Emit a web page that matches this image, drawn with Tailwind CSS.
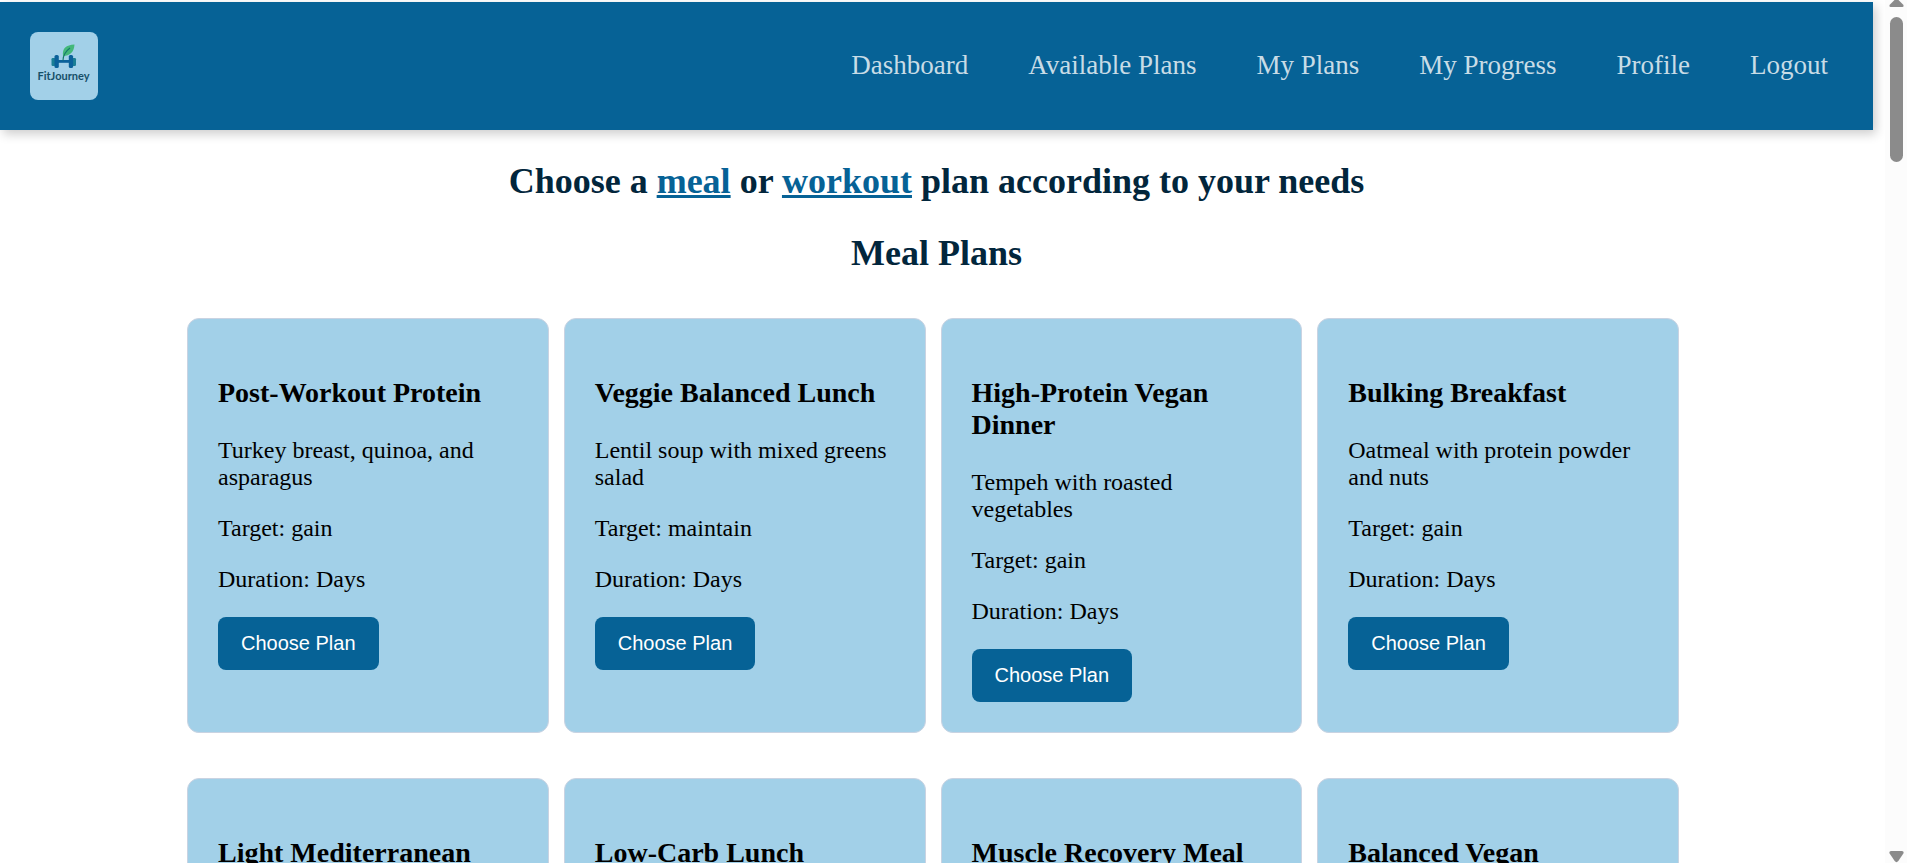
<!DOCTYPE html>
<html lang="en">
<head>
<meta charset="utf-8">
<title>FitJourney</title>
<script src="https://cdn.jsdelivr.net/npm/@tailwindcss/browser@4"></script>
</head>
<body class="h-screen overflow-hidden bg-white font-['Times_New_Roman','Liberation_Serif',serif] text-black">
<div class="flex h-full">
  <div class="h-full min-w-0 flex-1 overflow-hidden pt-0.5 pr-3">
    <header class="flex h-32 items-center justify-between bg-[#066296] pr-[45px] pl-[30px] shadow-[3px_4px_10px_rgba(0,0,0,0.2)]">
      <a href="#" aria-label="FitJourney home" class="block size-[68px] overflow-hidden rounded-lg bg-[#a2d0e8]">
        <svg viewBox="0 0 68 68" class="size-full">
          <g fill="#1a7f95"><rect x="21.500" y="26" width="4" height="8" rx="1.200"/><rect x="42" y="26" width="4" height="8" rx="1.200"/></g>
          <g fill="#0a619a"><rect x="24.500" y="23" width="4.300" height="13" rx="1.600"/><rect x="38.800" y="23" width="4.300" height="13" rx="1.600"/><rect x="28" y="28" width="12" height="2.800"/></g>
          <path d="M33 24C32 16 36 13 44.500 12.500C44 20 40 24 33 24Z" fill="#43b87a"/>
          <path d="M33 28.500C33 23 36 19 40 16" fill="none" stroke="#147a6a" stroke-width="1.100"/>
          <text x="33.500" y="48" text-anchor="middle" font-family="Lato, sans-serif" font-weight="700" font-size="11" fill="#164f68">FitJourney</text>
        </svg>
      </a>
      <nav class="flex gap-[60px] pb-0.5 text-[27px] leading-8 text-[#c8dce6]">
        <a href="#">Dashboard</a>
        <a href="#">Available Plans</a>
        <a href="#">My Plans</a>
        <a href="#">My Progress</a>
        <a href="#">Profile</a>
        <a href="#">Logout</a>
      </nav>
    </header>
    <main class="pt-[30px]">
      <h1 class="text-center text-4xl leading-[42px] font-bold text-[#02263c]">Choose a <a href="#meal" class="text-[#066296] underline">meal</a> or <a href="#workout" class="text-[#066296] underline">workout</a> plan according to your needs</h1>
      <h2 id="meal" class="mt-[30px] text-center text-4xl leading-[42px] font-bold text-[#02263c]">Meal Plans</h2>
      <section class="mt-11 mr-[194px] ml-[187px] grid grid-cols-4 gap-x-[15px] gap-y-[45px] text-2xl leading-[27px]">
        <article class="rounded-xl border border-[#c9d3e2] bg-[#a2d0e8] p-[30px]">
          <h3 class="my-7 text-[28px] leading-8 font-bold">Post-Workout Protein</h3>
          <p class="mb-6">Turkey breast, quinoa, and asparagus</p>
          <p class="mb-6">Target: gain</p>
          <p class="mb-6">Duration: Days</p>
          <button class="block rounded-lg bg-[#066296] px-[23px] py-[15px] font-['Liberation_Sans',sans-serif] text-xl leading-[23px] text-white">Choose Plan</button>
        </article>
        <article class="rounded-xl border border-[#c9d3e2] bg-[#a2d0e8] p-[30px]">
          <h3 class="my-7 text-[28px] leading-8 font-bold">Veggie Balanced Lunch</h3>
          <p class="mb-6">Lentil soup with mixed greens salad</p>
          <p class="mb-6">Target: maintain</p>
          <p class="mb-6">Duration: Days</p>
          <button class="block rounded-lg bg-[#066296] px-[23px] py-[15px] font-['Liberation_Sans',sans-serif] text-xl leading-[23px] text-white">Choose Plan</button>
        </article>
        <article class="rounded-xl border border-[#c9d3e2] bg-[#a2d0e8] p-[30px]">
          <h3 class="my-7 text-[28px] leading-8 font-bold">High-Protein Vegan Dinner</h3>
          <p class="mb-6">Tempeh with roasted vegetables</p>
          <p class="mb-6">Target: gain</p>
          <p class="mb-6">Duration: Days</p>
          <button class="block rounded-lg bg-[#066296] px-[23px] py-[15px] font-['Liberation_Sans',sans-serif] text-xl leading-[23px] text-white">Choose Plan</button>
        </article>
        <article class="rounded-xl border border-[#c9d3e2] bg-[#a2d0e8] p-[30px]">
          <h3 class="my-7 text-[28px] leading-8 font-bold">Bulking Breakfast</h3>
          <p class="mb-6">Oatmeal with protein powder and nuts</p>
          <p class="mb-6">Target: gain</p>
          <p class="mb-6">Duration: Days</p>
          <button class="block rounded-lg bg-[#066296] px-[23px] py-[15px] font-['Liberation_Sans',sans-serif] text-xl leading-[23px] text-white">Choose Plan</button>
        </article>
        <article class="rounded-xl border border-[#c9d3e2] bg-[#a2d0e8] p-[30px]">
          <h3 class="my-7 text-[28px] leading-8 font-bold">Light Mediterranean</h3>
        </article>
        <article class="rounded-xl border border-[#c9d3e2] bg-[#a2d0e8] p-[30px]">
          <h3 class="my-7 text-[28px] leading-8 font-bold">Low-Carb Lunch</h3>
        </article>
        <article class="rounded-xl border border-[#c9d3e2] bg-[#a2d0e8] p-[30px]">
          <h3 class="my-7 text-[28px] leading-8 font-bold">Muscle Recovery Meal</h3>
        </article>
        <article class="rounded-xl border border-[#c9d3e2] bg-[#a2d0e8] p-[30px]">
          <h3 class="my-7 text-[28px] leading-8 font-bold">Balanced Vegan</h3>
        </article>
      </section>
    </main>
  </div>
  <!-- Scrollbar -->
  <div class="flex h-full w-[22px] shrink-0 flex-col items-center bg-[#fcfcfc]" aria-hidden="true">
    <svg viewBox="0 0 15 8" class="h-2 w-[15px] shrink-0" fill="#8b8b8b"><path d="M5.500 0H9.500L14.500 5Q15 7 13.500 7H1.500Q0 7 .500 5Z"/></svg>
    <div class="mt-[9px] h-[145px] w-[13px] rounded-full bg-[#8b8b8b]"></div>
    <svg viewBox="0 0 15 12" class="mt-auto h-3 w-[15px] shrink-0" fill="#8b8b8b"><path d="M2 0H13Q15.500 .500 14.200 2.800L9.300 10Q7.500 12.300 5.700 10L.800 2.800Q-.500 .500 2 0Z"/></svg>
  </div>
</div>
</body>
</html>
